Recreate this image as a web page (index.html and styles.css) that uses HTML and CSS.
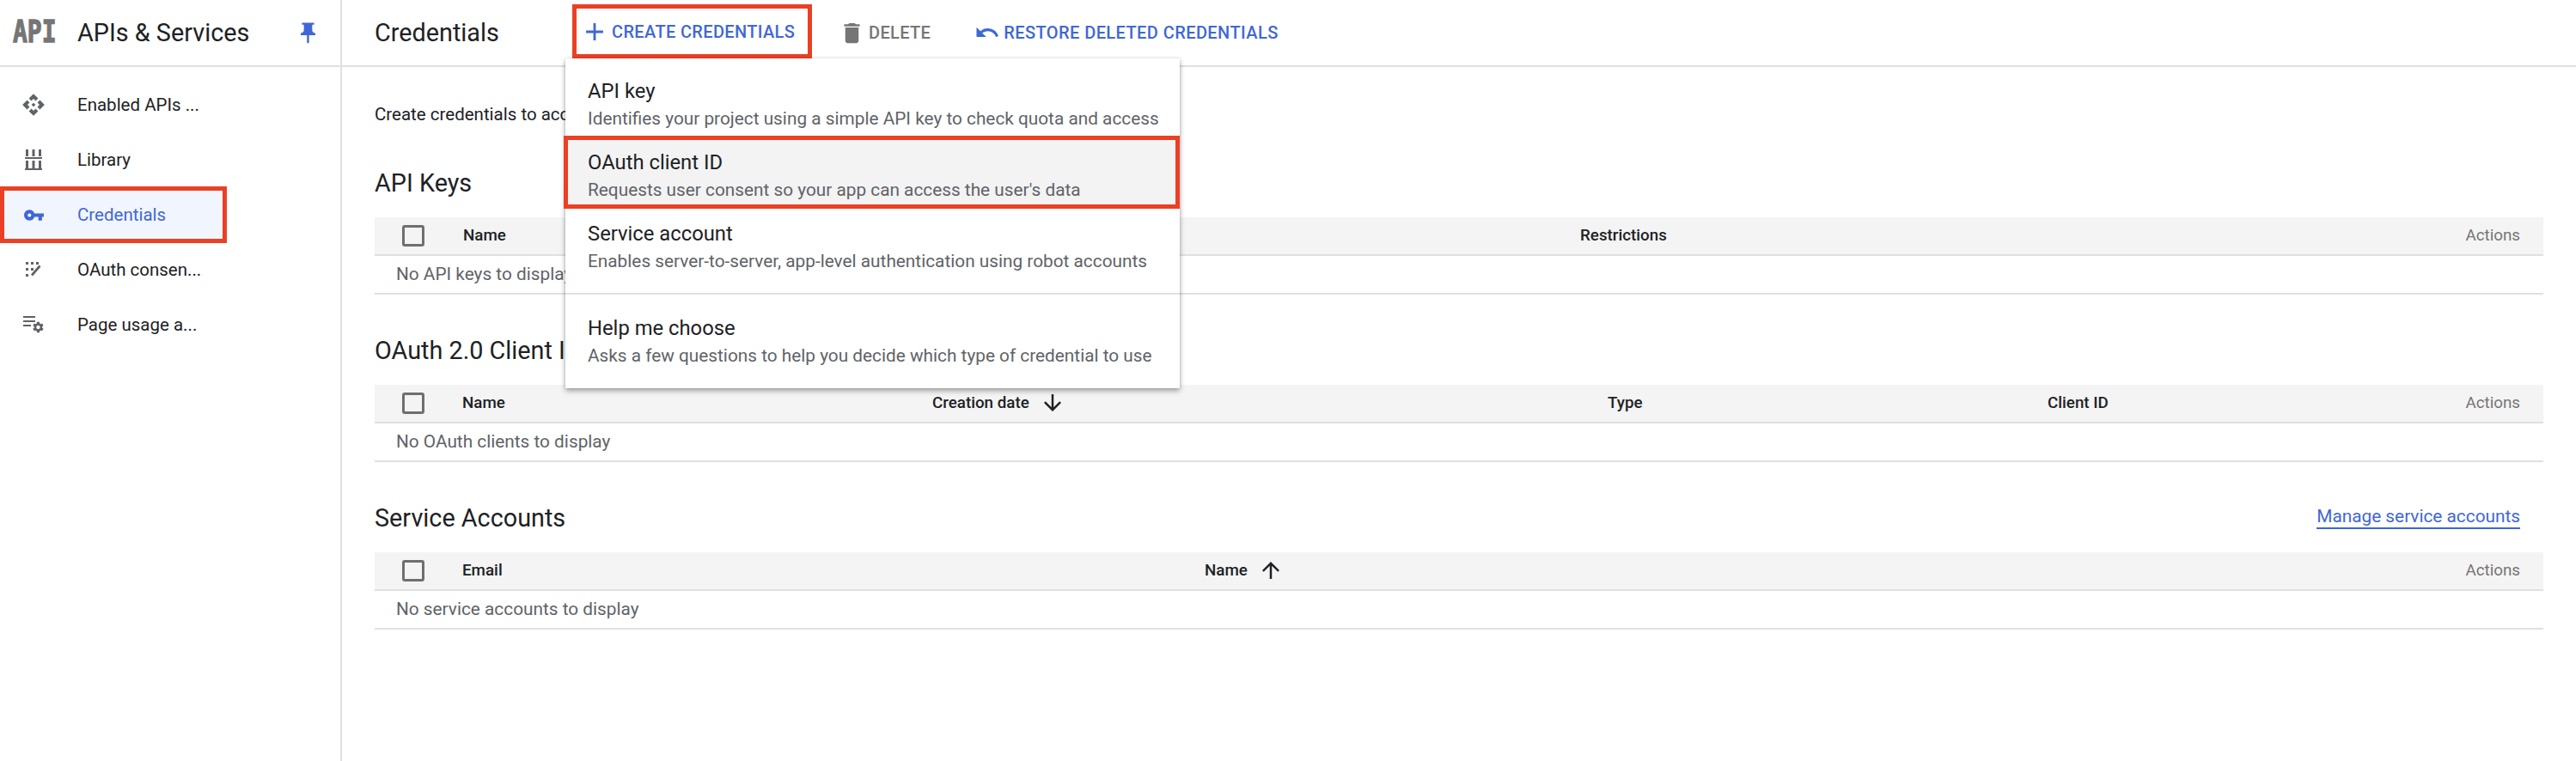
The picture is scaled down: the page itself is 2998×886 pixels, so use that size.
FILE: index.html
```html
<!DOCTYPE html>
<html lang="en">
<head>
  <meta charset="UTF-8" />
  <title>Credentials - APIs &amp; Services</title>
  <link rel="stylesheet" href="styles.css">
</head>
<body>
  <div class="page">
    <aside class="sidebar">
      <div class="side-head">
        <span class="api-logo">API</span>
        <span class="side-title">APIs &amp; Services</span>
        <svg class="pin" viewBox="0 0 24 24"><path d="M16 9V4h1c.55 0 1-.45 1-1s-.45-1-1-1H7c-.55 0-1 .45-1 1s.45 1 1 1h1v5c0 1.66-1.34 3-3 3v2h5.97v7l1 1 1-1v-7H19v-2c-1.66 0-3-1.34-3-3z"/></svg>
      </div>
      <nav class="side-nav">
        <a class="nav-item">
          <span class="nav-icon"><svg width="28" height="28" viewBox="0 0 24 24"><path d="M14 12l-2 2-2-2 2-2 2 2zm-2-6l2.12 2.12 2.5-2.5L12 1 7.38 5.62l2.5 2.5L12 6zm-6 6l2.12-2.12-2.5-2.5L1 12l4.62 4.62 2.5-2.5L6 12zm12 0l-2.12 2.12 2.5 2.5L23 12l-4.62-4.62-2.5 2.5L18 12zm-6 6l-2.12-2.12-2.5 2.5L12 23l4.62-4.62-2.5-2.5L12 18z"/></svg></span>
          Enabled APIs ...
        </a>
        <a class="nav-item">
          <span class="nav-icon"><svg width="20" height="24" viewBox="0 0 20 24"><path d="M1 0h3v8H1zM8.500 0h3v8h-3zM16 0h3v8h-3zM0 9h20v2H0zM1 13h3v9H1zM8.500 13h3v9h-3zM16 13h3v9h-3zM0 22h20v2H0z"/></svg></span>
          Library
        </a>
        <a class="nav-item active">
          <span class="nav-icon"><svg width="25" height="25" viewBox="0 0 24 24"><path d="M12.65 10C11.83 7.67 9.61 6 7 6c-3.31 0-6 2.69-6 6s2.69 6 6 6c2.61 0 4.83-1.67 5.65-4H17v4h4v-4h2v-4H12.65zM7 14c-1.1 0-2-.9-2-2s.9-2 2-2 2 .9 2 2-.9 2-2 2z"/></svg></span>
          Credentials
        </a>
        <a class="nav-item">
          <span class="nav-icon"><svg width="18" height="18" viewBox="0 0 18 18"><path d="M0 0h3v3H0zM6 0h3v3H6zM12 0h3v3h-3zM0 7h3v3H0zM6 7h3v3H6zM0 14h3v3H0zM15.500 3.500l2 2L8 16.500l-2-2z"/></svg></span>
          OAuth consen...
        </a>
        <a class="nav-item">
          <span class="nav-icon"><svg width="25" height="20" viewBox="0 0 25 20"><path d="M0 0h14v2H0zM0 5h14v2H0zM0 10h9v2H0z"/><path transform="translate(10 5.500) scale(.62)" d="M19.430 12.980c.04-.32.07-.64.07-.98s-.03-.66-.07-.98l2.110-1.650c.19-.15.24-.42.12-.64l-2-3.460c-.12-.22-.39-.3-.61-.22l-2.490 1c-.52-.4-1.080-.73-1.690-.98l-.38-2.650C14.460 2.180 14.250 2 14 2h-4c-.25 0-.46.18-.49.42l-.38 2.650c-.61.25-1.170.59-1.690.98l-2.490-1c-.23-.09-.49 0-.61.22l-2 3.460c-.13.22-.07.49.12.64l2.110 1.650c-.04.32-.07.65-.07.98s.03.66.07.98l-2.110 1.650c-.19.15-.24.42-.12.64l2 3.460c.12.22.39.3.61.22l2.490-1c.52.4 1.080.73 1.690.98l.38 2.650c.03.24.24.42.49.42h4c.25 0 .46-.18.49-.42l.38-2.650c.61-.25 1.170-.59 1.690-.98l2.490 1c.23.09.49 0 .61-.22l2-3.460c.12-.22.07-.49-.12-.64l-2.110-1.650zM12 15.500c-1.930 0-3.500-1.570-3.500-3.500s1.570-3.500 3.500-3.500 3.500 1.570 3.500 3.500-1.570 3.500-3.500 3.500z"/></svg></span>
          Page usage a...
        </a>
      </nav>
    </aside>

    <main class="main">
      <header class="topbar">
        <h1 class="page-title">Credentials</h1>
        <div class="create-wrap">
          <button class="tool-btn create-btn">
            <svg class="plus" viewBox="0 0 24 24"><path d="M19 13h-6v6h-2v-6H5v-2h6V5h2v6h6v2z"/></svg>
            CREATE CREDENTIALS
          </button>
          <div class="menu">
            <div class="menu-item first">
              <div class="menu-title">API key</div>
              <div class="menu-sub">Identifies your project using a simple API key to check quota and access</div>
            </div>
            <div class="menu-item selected">
              <div class="menu-title">OAuth client ID</div>
              <div class="menu-sub">Requests user consent so your app can access the user's data</div>
            </div>
            <div class="menu-item service">
              <div class="menu-title">Service account</div>
              <div class="menu-sub">Enables server-to-server, app-level authentication using robot accounts</div>
            </div>
            <div class="menu-item help">
              <div class="menu-title">Help me choose</div>
              <div class="menu-sub">Asks a few questions to help you decide which type of credential to use</div>
            </div>
          </div>
        </div>
        <button class="tool-btn delete-btn">
          <svg class="trash" viewBox="0 0 24 24"><path d="M6 19c0 1.100.9 2 2 2h8c1.100 0 2-.9 2-2V7H6v12zM19 4h-3.500l-1-1h-5l-1 1H5v2h14V4z"/></svg>
          DELETE
        </button>
        <button class="tool-btn restore-btn">
          <svg class="undo" viewBox="0 0 24 24"><path d="M12.500 8c-2.650 0-5.050.99-6.900 2.600L2 7v9h9l-3.620-3.620c1.390-1.160 3.160-1.880 5.120-1.880 3.540 0 6.550 2.310 7.600 5.500l2.370-.78C21.080 11.030 17.150 8 12.500 8z"/></svg>
          RESTORE DELETED CREDENTIALS
        </button>
      </header>

      <div class="content">
        <p class="intro">Create credentials to access your enabled APIs</p>

        <section class="block">
          <div class="block-head"><h2>API Keys</h2></div>
          <div class="row head keys">
            <span class="check"></span>
            <span>Name</span>
            <span>Restrictions</span>
            <span class="actions">Actions</span>
          </div>
          <div class="row empty">No API keys to display</div>
        </section>

        <section class="block">
          <div class="block-head"><h2>OAuth 2.0 Client IDs</h2></div>
          <div class="row head clients">
            <span class="check"></span>
            <span>Name</span>
            <span class="sort">Creation date
              <svg viewBox="0 0 24 24"><path d="M20 12l-1.410-1.410L13 16.170V4h-2v12.170l-5.580-5.590L4 12l8 8 8-8z"/></svg>
            </span>
            <span>Type</span>
            <span>Client ID</span>
            <span class="actions">Actions</span>
          </div>
          <div class="row empty">No OAuth clients to display</div>
        </section>

        <section class="block">
          <div class="block-head">
            <h2>Service Accounts</h2>
            <a class="manage">Manage service accounts</a>
          </div>
          <div class="row head accounts">
            <span class="check"></span>
            <span>Email</span>
            <span class="sort">Name
              <svg viewBox="0 0 24 24"><path d="M4 12l1.410 1.410L11 7.830V20h2V7.830l5.580 5.590L20 12l-8-8-8 8z"/></svg>
            </span>
            <span class="actions">Actions</span>
          </div>
          <div class="row empty">No service accounts to display</div>
        </section>
      </div>
    </main>
  </div>
</body>
</html>
```

FILE: styles.css
```css
* {
  box-sizing: border-box;
}
body {
  margin: 0;
  font-family: Roboto, "Liberation Sans", sans-serif;
  font-size: 20.500px;
  color: #202124;
  background: white;
}
.page {
  display: flex;
  height: 886px;
  overflow: hidden;
}

/* sidebar */
.sidebar {
  width: 398px;
  flex: none;
  border-right: 2px solid #e0e0e0;
}
.side-head {
  display: flex;
  align-items: center;
  height: 78px;
  border-bottom: 2px solid #e0e0e0;
  padding-left: 15px;
}
.api-logo {
  display: inline-block;
  width: 75px;
  font-family: "DejaVu Sans Mono", monospace;
  font-weight: bold;
  font-size: 28px;
  line-height: 28px;
  color: #757575;
  -webkit-text-stroke: 1px #757575;
  transform: scaleY(1.25);
}
.side-title {
  font-size: 28.800px;
  flex: 1;
}
.pin {
  width: 29px;
  height: 29px;
  fill: #3f67d6;
  margin-right: 23px;
}
.side-nav {
  padding-top: 12px;
}
.nav-item {
  display: flex;
  align-items: center;
  height: 64px;
  width: 264px;
  color: #202124;
}
.nav-icon {
  width: 90px;
  padding-left: 26px;
  padding-right: 38px;
  flex: none;
  display: flex;
  justify-content: center;
}
.nav-icon svg {
  fill: #5f6368;
  flex: none;
}
.nav-item.active {
  border: 5px solid #ea4025;
  height: 66px;
  margin: -1px 0;
  background: #f1f5fd;
  color: #3f67d6;
}
.nav-item.active .nav-icon {
  width: 85px;
  padding-left: 21px;
}
.nav-item.active .nav-icon svg {
  fill: #3f67d6;
}

/* top bar */
.main {
  flex: 1;
  min-width: 0;
}
.topbar {
  display: flex;
  align-items: center;
  height: 78px;
  border-bottom: 2px solid #e0e0e0;
  padding-left: 38px;
}
.page-title {
  font-size: 28.800px;
  font-weight: 400;
  margin: 0;
  width: 230px;
}
.tool-btn {
  display: flex;
  align-items: center;
  background: none;
  border: none;
  padding: 0;
  font-family: inherit;
  font-size: 20px;
  font-weight: 500;
  letter-spacing: 0.35px;
  color: #3f67d6;
}
.tool-btn svg {
  flex: none;
}
.create-wrap {
  position: relative;
  align-self: flex-start;
  margin-top: 5px;
  z-index: 2;
}
.create-btn {
  border: 5px solid #ea4025;
  width: 279px;
  height: 63px;
  padding-left: 4px;
}
.plus {
  width: 34px;
  height: 34px;
  fill: #3f67d6;
  margin-right: 3px;
}
.delete-btn {
  color: #757575;
  margin-left: 31px;
}
.trash {
  width: 31px;
  height: 31px;
  fill: #757575;
  margin-right: 4px;
}
.restore-btn {
  margin-left: 51px;
  letter-spacing: 0.42px;
}
.undo {
  width: 30px;
  height: 30px;
  fill: #3f67d6;
  margin-right: 4px;
}

/* dropdown */
.menu {
  position: absolute;
  top: 63px;
  left: -8px;
  width: 715px;
  background: white;
  box-shadow: 0 3px 6px rgba(0,0,0,0.35), 0 0 3px rgba(0,0,0,0.12);
}
.menu-item {
  padding-left: 26px;
}
.menu-title {
  font-size: 23.800px;
  line-height: 32px;
  color: #202124;
}
.menu-sub {
  font-size: 20.800px;
  line-height: 32px;
  color: #5f6368;
}
.menu-item.first {
  padding-top: 22px;
  padding-bottom: 4px;
}
.menu-item.selected {
  border: 5px solid #ea4025;
  background: #f3f3f3;
  margin-left: -2px;
  padding: 10px 0 1px 23px;
}
.menu-item.service {
  padding-top: 13px;
  padding-bottom: 21px;
  border-bottom: 2px solid #e0e0e0;
}
.menu-item.help {
  padding-top: 23px;
  padding-bottom: 22px;
}

/* tables */
.content {
  padding: 0 38px 0 38px;
}
.intro {
  margin: 0;
  height: 105px;
  padding-top: 42px;
  line-height: 26px;
}
.block {
  margin-bottom: 35px;
}
.block-head {
  display: flex;
  justify-content: space-between;
  align-items: center;
  height: 59.500px;
  margin-bottom: 10px;
}
.block-head h2 {
  font-size: 28.800px;
  font-weight: 400;
  margin: 0;
}
.manage {
  color: #3f67d6;
  font-size: 20.800px;
  border-bottom: 2px solid #3f67d6;
  line-height: 24px;
  padding-bottom: 1px;
  margin-right: 27px;
}
.row {
  display: grid;
  align-items: center;
  height: 45px;
  border-bottom: 2px solid #e0e0e0;
}
.row.head {
  background: #f4f4f4;
  padding: 0 27px 0 32px;
  font-size: 18.800px;
  font-weight: 500;
}
.row.empty {
  padding-left: 25px;
  color: #5f6368;
  height: 45.500px;
  font-size: 20.800px;
}
.keys {
  grid-template-columns: 71px 1300px 1fr auto;
}
.clients {
  grid-template-columns: 70px 547px 786px 512px 1fr auto;
}
.accounts {
  grid-template-columns: 70px 864px 1fr auto;
}
.actions {
  font-weight: 400;
  color: #757575;
}
.check {
  width: 26px;
  height: 25px;
  border: 3px solid #6f6f6f;
  border-radius: 3px;
}
.sort {
  display: flex;
  align-items: center;
  gap: 12px;
}
.sort svg {
  width: 30px;
  height: 30px;
  fill: #202124;
}
```
